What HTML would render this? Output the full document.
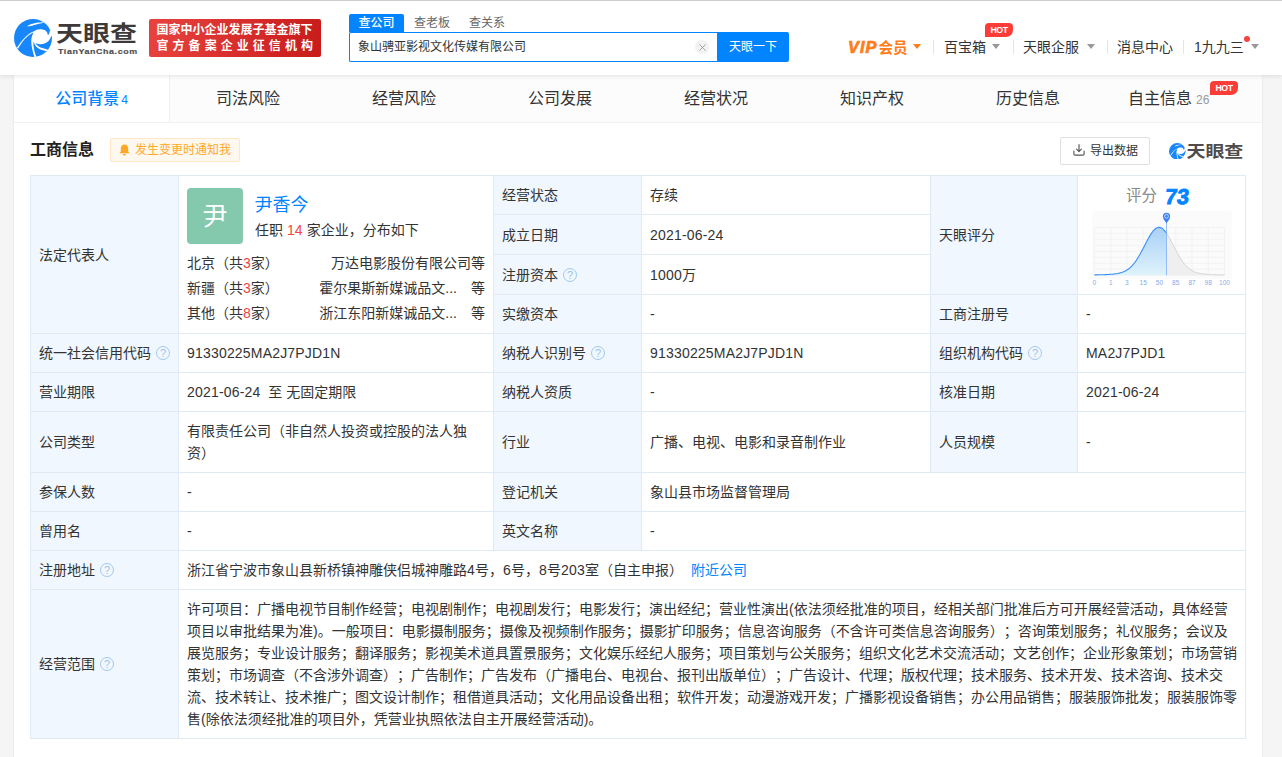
<!DOCTYPE html>
<html lang="zh-CN">
<head>
<meta charset="utf-8">
<title>天眼查</title>
<style>
*{box-sizing:border-box;margin:0;padding:0}
html,body{width:1282px;height:757px;overflow:hidden}
body{background:#f5f5f5;font-family:"Liberation Sans","Noto Sans CJK SC",sans-serif;font-size:14px;color:#333;position:relative;text-spacing-trim:space-all;-webkit-font-smoothing:auto}
a{color:#0084ff;text-decoration:none}
.abs{position:absolute}
/* header */
#hdr{position:absolute;left:0;top:0;width:1282px;height:75px;background:#fff;border-top:1px solid #ccc;box-shadow:0 1px 5px rgba(0,0,0,.105);z-index:5}
#logo{position:absolute;left:14px;top:18px}
#logotxt{position:absolute;left:56px;top:19.3px;font-size:27px;font-weight:700;color:#3e3a39;letter-spacing:0px;line-height:34px;white-space:nowrap;transform:scaleY(.82);transform-origin:0 0}
#logosub{position:absolute;left:57.5px;top:46.3px;font-size:7.4px;font-weight:700;color:#4d4d4d;letter-spacing:.5px;line-height:10px;white-space:nowrap;transform:scaleX(1.2);transform-origin:0 0;-webkit-text-stroke:.15px #4d4d4d}
#redb{position:absolute;left:149px;top:18px;width:172px;height:38px;border-radius:2px;background:linear-gradient(100deg,#e8433f,#c81b1b);color:#fff;font-weight:700;font-size:12px;line-height:16.6px;padding:2.6px 0 0 7.5px;white-space:nowrap}
#redb .l1{letter-spacing:0px;display:block}
#redb .l2{letter-spacing:4.05px;display:block}
.stab{position:absolute;top:13px;height:18px;line-height:18px;font-size:12px;color:#666;white-space:nowrap}
#st1{left:349px;width:55px;background:#0084ff;color:#fff;text-align:center;border-radius:2px 2px 0 0;font-weight:500}
#sbox{position:absolute;left:349px;top:31px;width:368px;height:30px;border:1px solid #0084ff;border-right:none;border-radius:2px 0 0 2px;background:#fff;font-size:12px;line-height:29.4px;padding-left:8px;color:#333;white-space:nowrap}
#sclr{position:absolute;left:695px;top:39px;width:14px;height:14px;border-radius:7px;background:#f2f2f2;color:#888;font-size:11px;line-height:13px;text-align:center}
#sbtn{position:absolute;left:717px;top:31px;width:72px;height:30px;background:#0084ff;color:#fff;font-size:12px;line-height:30.5px;text-align:center;border-radius:0 2px 2px 0}
.nav{position:absolute;top:37px;height:18px;line-height:18px;font-size:14px;color:#333;white-space:nowrap}
.sep{position:absolute;top:39px;width:1px;height:14px;background:#e5e5e5}
.tri{position:absolute;top:43.2px;width:0;height:0;border-left:4.6px solid transparent;border-right:4.6px solid transparent;border-top:5.8px solid #999}
.hot{position:absolute;height:14px;background:#fb3c37;color:#fff;font-size:8.8px;font-weight:700;line-height:14.5px;text-align:center;border-radius:4px 4px 7px 0;letter-spacing:-.5px;font-family:"Liberation Sans",sans-serif}
/* container */
#wrap{position:absolute;left:14px;top:75px;width:1248px;height:690px;background:#fff;box-shadow:0 0 2px rgba(0,0,0,.10)}
.tab{position:absolute;top:75px;height:48px;line-height:47px;font-size:16px;color:#333;text-align:center;background:#fcfcfc;border-bottom:1px solid #f1f1f1;white-space:nowrap}
.tab.on{background:#fff;color:#0084ff;font-weight:500;border-bottom-color:#f1f1f1}
.tab small{font-size:12px;color:#999;font-weight:400;margin-left:2px}
.tab.on small{color:#0084ff}
#ttl{position:absolute;left:30px;top:138px;font-size:16px;font-weight:700;line-height:24px;color:#222}
#ntf{position:absolute;left:110px;top:138px;width:130px;height:24px;border:1px solid #ffe7c7;background:#fff8ee;border-radius:2px;color:#ffa826;font-size:12px;line-height:22px;padding-left:24px;white-space:nowrap}
#exp{position:absolute;left:1060px;top:137px;width:90px;height:28px;border:1px solid #e0e0e0;border-radius:2px;background:#fff;font-size:12px;line-height:26.8px;color:#333;padding-left:29px;white-space:nowrap}
/* table */
.c{position:absolute;border-left:1px solid #dfeaf5;border-top:1px solid #dfeaf5;padding:0 8px;font-size:14px;color:#333;display:flex;align-items:center;background:#fff;line-height:22px}
.c.l{background:#f0f7fe}
#tbl{position:absolute;left:30px;top:175px;width:1216px;height:564px;border-right:1px solid #dfeaf5;border-bottom:1px solid #dfeaf5}
.q{display:inline-block;width:14px;height:14px;border:1.1px solid #a3c8ed;border-radius:7px;color:#9cc3ec;font-size:11px;line-height:12.6px;text-align:center;margin-left:5px;font-family:"Liberation Sans",sans-serif}
.red{color:#f5433e}

.av{position:absolute;left:8px;top:12px;width:56px;height:56px;border-radius:4px;background:#84c9ad;color:#fff;font-size:25px;line-height:56px;text-align:center}
.nm{position:absolute;left:75.5px;top:17px;font-size:18px;line-height:24px;color:#0084ff;white-space:nowrap}
.job{position:absolute;left:76px;top:44px;font-size:14px;line-height:20px;white-space:nowrap}
.ar{position:absolute;left:8px;width:298px;height:20px;line-height:20px;display:flex;justify-content:space-between;white-space:nowrap}
.ar i{display:inline-block;width:14px}
.scope{line-height:22px;white-space:nowrap}
.n{letter-spacing:.19px}
</style>
</head>
<body>
<div id="wrap"></div>
<div id="hdr">
  <svg id="logo" width="38" height="38" viewBox="0 0 38 38"><circle cx="19" cy="19" r="19" fill="#1787fb"/><path d="M33.93 16.30C33.77 15.80 33.52 14.20 32.97 13.32C32.42 12.43 31.74 11.50 30.63 10.97C29.52 10.44 27.62 10.18 26.32 10.15C25.02 10.11 23.80 10.46 22.83 10.78C21.86 11.10 20.87 11.84 20.48 12.05C19.45 12.61 16.25 13.93 14.27 15.41C12.28 16.89 10.44 18.71 8.56 20.93C6.68 23.15 3.91 27.43 2.98 28.73C3.15 28.91 3.83 29.62 3.99 29.80C4.88 28.46 7.52 24.00 9.32 21.75C11.12 19.50 13.08 17.73 14.77 16.30C16.47 14.86 18.69 13.65 19.47 13.13C19.18 13.95 18.11 16.40 17.76 18.07C17.40 19.74 17.24 21.14 17.31 23.15C17.39 25.15 17.67 27.58 18.20 30.12C18.73 32.66 20.10 36.99 20.48 38.36C20.80 38.31 22.07 38.10 22.38 38.05C22.04 36.94 20.78 33.34 20.29 31.39C19.81 29.43 19.58 27.80 19.47 26.32C19.35 24.84 19.57 23.15 19.59 22.51C19.97 23.30 20.76 25.95 21.88 27.27C23.00 28.59 24.47 29.61 26.32 30.44C28.17 31.26 31.86 31.92 32.97 32.21C33.13 31.97 33.77 31.00 33.93 30.75C32.87 30.44 29.27 29.54 27.58 28.85C25.89 28.17 24.82 27.46 23.78 26.63C22.74 25.81 21.77 24.36 21.37 23.91C22.09 24.12 24.17 25.07 25.68 25.17C27.19 25.28 28.96 25.09 30.44 24.54C31.92 23.99 33.39 23.15 34.56 21.88C35.73 20.61 36.99 17.76 37.48 16.93C37.73 16.49 39.06 15.11 39.00 14.27C38.93 13.42 37.41 12.26 37.10 11.86C36.86 11.86 35.93 11.86 35.70 11.86C35.64 12.26 35.62 13.53 35.32 14.27C35.02 15.01 34.16 15.96 33.93 16.30Z" fill="#fff"/><path d="M12.87 7.29C13.53 6.95 15.20 5.84 16.80 5.26C18.41 4.68 20.40 4.14 22.51 3.80C24.62 3.47 28.32 3.33 29.49 3.23C29.51 3.32 29.59 3.66 29.61 3.74C28.54 3.99 25.07 4.78 23.15 5.26C21.22 5.75 19.78 6.32 18.07 6.66C16.36 7.00 13.74 7.19 12.87 7.29Z" fill="#fff"/></svg>
  <div id="logotxt">天眼查</div>
  <div id="logosub">TianYanCha.com</div>
  <div id="redb"><span class="l1">国家中小企业发展子基金旗下</span><span class="l2">官方备案企业征信机构</span></div>

  <div class="stab" id="st1">查公司</div>
  <div class="stab" style="left:414px">查老板</div>
  <div class="stab" style="left:469px">查关系</div>
  <div id="sbox">象山骋亚影视文化传媒有限公司</div>
  <div id="sclr"><svg class="abs" style="left:3.5px;top:3.5px" width="7" height="7" viewBox="0 0 7 7"><path d="M0.4 0.4 L6.6 6.6 M6.6 0.4 L0.4 6.6" stroke="#8a8a8a" stroke-width="0.75" fill="none"/></svg></div>
  <div id="sbtn">天眼一下</div>

  <div class="nav" style="left:848px;top:37.2px;color:#ff7d18;font-weight:700;font-style:italic;font-size:16.3px;font-family:'Liberation Sans',sans-serif;letter-spacing:1.1px;-webkit-text-stroke:.7px #ff7d18">VIP</div>
  <div class="nav" style="left:878.5px;top:37.5px;color:#ff7d18;font-weight:700;font-size:14.5px">会员</div>
  <div class="tri" style="left:913px;border-top-color:#ff7d18"></div>
  <div class="sep" style="left:933px"></div>
  <div class="nav" style="left:944px">百宝箱</div>
  <div class="tri" style="left:992.3px"></div>
  <div class="hot" style="left:985px;top:21.8px;width:28px">HOT</div>
  <div class="sep" style="left:1013px"></div>
  <div class="nav" style="left:1023px">天眼企服</div>
  <div class="tri" style="left:1086.5px"></div>
  <div class="sep" style="left:1107px"></div>
  <div class="nav" style="left:1117px">消息中心</div>
  <div class="sep" style="left:1183px"></div>
  <div class="nav" style="left:1194px">1九九三</div>
  <div class="abs" style="left:1244px;top:35px;width:6px;height:6px;border-radius:3px;background:#f5433e"></div>
  <div class="tri" style="left:1250.8px"></div>
</div>

<!-- tabs -->
<div class="tab on" style="left:14px;width:155px">公司背景<small>4</small></div>
<div class="tab" style="left:169px;width:157px;border-left:1px solid #efefef">司法风险</div>
<div class="tab" style="left:326px;width:156px">经营风险</div>
<div class="tab" style="left:482px;width:156px">公司发展</div>
<div class="tab" style="left:638px;width:156px">经营状况</div>
<div class="tab" style="left:794px;width:156px">知识产权</div>
<div class="tab" style="left:950px;width:156px">历史信息</div>
<div class="tab" style="left:1106px;width:156px;text-align:left;padding-left:22px">自主信息<small style="margin-left:4px">26</small></div>
<div class="hot" style="left:1210px;top:80.8px;width:28px;z-index:2">HOT</div>

<div id="ttl">工商信息</div>
<div id="ntf">发生变更时通知我
  <svg class="abs" style="left:8.2px;top:4.6px" width="11" height="12" viewBox="0 0 11 12"><path d="M5.5 0.5 C3 0.5 1.8 2.5 1.8 5 L1.8 7.5 L0.5 9.2 L10.5 9.2 L9.2 7.5 L9.2 5 C9.2 2.5 8 0.5 5.5 0.5 Z M4 10 L7 10 C7 11 6.3 11.6 5.5 11.6 C4.7 11.6 4 11 4 10Z" fill="#ffa826"/></svg>
</div>
<div id="exp">导出数据
  <svg class="abs" style="left:12px;top:6.3px" width="12" height="12" viewBox="0 0 12 12"><path d="M6 0.6 V7.4 M3.6 5.2 L6 7.6 L8.4 5.2 M0.9 7 V9.9 Q0.9 11.1 2.1 11.1 H9.9 Q11.1 11.1 11.1 9.9 V7" fill="none" stroke="#555" stroke-width="1.15" stroke-linecap="round" stroke-linejoin="round"/></svg>
</div>
<div class="abs" id="wm" style="left:1169px;top:139px;white-space:nowrap">
  <svg class="abs" style="left:0.4px;top:3.6px" width="16.5" height="16.5" viewBox="0 0 38 38"><circle cx="19" cy="19" r="19" fill="#1787fb"/><path d="M33.93 16.30C33.77 15.80 33.52 14.20 32.97 13.32C32.42 12.43 31.74 11.50 30.63 10.97C29.52 10.44 27.62 10.18 26.32 10.15C25.02 10.11 23.80 10.46 22.83 10.78C21.86 11.10 20.87 11.84 20.48 12.05C19.45 12.61 16.25 13.93 14.27 15.41C12.28 16.89 10.44 18.71 8.56 20.93C6.68 23.15 3.91 27.43 2.98 28.73C3.15 28.91 3.83 29.62 3.99 29.80C4.88 28.46 7.52 24.00 9.32 21.75C11.12 19.50 13.08 17.73 14.77 16.30C16.47 14.86 18.69 13.65 19.47 13.13C19.18 13.95 18.11 16.40 17.76 18.07C17.40 19.74 17.24 21.14 17.31 23.15C17.39 25.15 17.67 27.58 18.20 30.12C18.73 32.66 20.10 36.99 20.48 38.36C20.80 38.31 22.07 38.10 22.38 38.05C22.04 36.94 20.78 33.34 20.29 31.39C19.81 29.43 19.58 27.80 19.47 26.32C19.35 24.84 19.57 23.15 19.59 22.51C19.97 23.30 20.76 25.95 21.88 27.27C23.00 28.59 24.47 29.61 26.32 30.44C28.17 31.26 31.86 31.92 32.97 32.21C33.13 31.97 33.77 31.00 33.93 30.75C32.87 30.44 29.27 29.54 27.58 28.85C25.89 28.17 24.82 27.46 23.78 26.63C22.74 25.81 21.77 24.36 21.37 23.91C22.09 24.12 24.17 25.07 25.68 25.17C27.19 25.28 28.96 25.09 30.44 24.54C31.92 23.99 33.39 23.15 34.56 21.88C35.73 20.61 36.99 17.76 37.48 16.93C37.73 16.49 39.06 15.11 39.00 14.27C38.93 13.42 37.41 12.26 37.10 11.86C36.86 11.86 35.93 11.86 35.70 11.86C35.64 12.26 35.62 13.53 35.32 14.27C35.02 15.01 34.16 15.96 33.93 16.30Z" fill="#fff"/><path d="M12.87 7.29C13.53 6.95 15.20 5.84 16.80 5.26C18.41 4.68 20.40 4.14 22.51 3.80C24.62 3.47 28.32 3.33 29.49 3.23C29.51 3.32 29.59 3.66 29.61 3.74C28.54 3.99 25.07 4.78 23.15 5.26C21.22 5.75 19.78 6.32 18.07 6.66C16.36 7.00 13.74 7.19 12.87 7.29Z" fill="#fff"/></svg>
  <span class="abs" style="left:17.5px;top:3.2px;font-size:19px;font-weight:700;color:#4f4c4b;line-height:24px;letter-spacing:-.1px;transform:scaleY(.84);transform-origin:0 0">天眼查</span>
</div>

<div id="tbl">
<div class="c l" style="left:0px;top:0px;width:148px;height:158px;">法定代表人</div>
<div class="c" style="left:148px;top:0px;width:315px;height:158px;display:block;padding:0"><div class="av">尹</div><a class="nm">尹香今</a><div class="job">任职 <span class="red"><span class="n">14</span></span> 家企业，分布如下</div>
<div class="ar" style="top:77.3px"><span>北京（共<span class="red">3</span>家）</span><span>万达电影股份有限公司等</span></div>
<div class="ar" style="top:102px"><span>新疆（共<span class="red">3</span>家）</span><span>霍尔果斯新媒诚品文...<i></i>等</span></div>
<div class="ar" style="top:126.8px"><span>其他（共<span class="red">8</span>家）</span><span>浙江东阳新媒诚品文...<i></i>等</span></div></div>
<div class="c l" style="left:463px;top:0px;width:148px;height:39px;">经营状态</div>
<div class="c" style="left:611px;top:0px;width:289px;height:39px;">存续</div>
<div class="c l" style="left:463px;top:39px;width:148px;height:40px;">成立日期</div>
<div class="c" style="left:611px;top:39px;width:289px;height:40px;"><span class="n">2021-06-24</span></div>
<div class="c l" style="left:463px;top:79px;width:148px;height:40px;">注册资本 <span class="q">?</span></div>
<div class="c" style="left:611px;top:79px;width:289px;height:40px;"><span class="n">1000</span>万</div>
<div class="c l" style="left:463px;top:119px;width:148px;height:39px;">实缴资本</div>
<div class="c" style="left:611px;top:119px;width:289px;height:39px;">-</div>
<div class="c l" style="left:900px;top:0px;width:147px;height:119px;">天眼评分</div>
<div class="c" style="left:1047px;top:0px;width:168px;height:119px;display:block;padding:0"><svg class="abs" style="left:0;top:0" width="167" height="118" viewBox="0 0 167 118">
<defs><linearGradient id="bg1" x1="0" y1="0" x2="0" y2="1"><stop offset="0" stop-color="#a9d0f7"/><stop offset="1" stop-color="#def3fb"/></linearGradient></defs>
<rect x="13.7" y="35" width="140" height="68" fill="#fbfbfb"/>
<g stroke="#ededed" stroke-width="0.6"><line x1="16.4" y1="51.4" x2="16.4" y2="99.2"/><line x1="32.7" y1="51.4" x2="32.7" y2="99.2"/><line x1="48.9" y1="51.4" x2="48.9" y2="99.2"/><line x1="65.2" y1="51.4" x2="65.2" y2="99.2"/><line x1="81.4" y1="51.4" x2="81.4" y2="99.2"/><line x1="97.7" y1="51.4" x2="97.7" y2="99.2"/><line x1="114.0" y1="51.4" x2="114.0" y2="99.2"/><line x1="130.2" y1="51.4" x2="130.2" y2="99.2"/><line x1="146.5" y1="51.4" x2="146.5" y2="99.2"/><line x1="16.4" y1="51.4" x2="146.5" y2="51.4"/><line x1="16.4" y1="57.4" x2="146.5" y2="57.4"/><line x1="16.4" y1="63.4" x2="146.5" y2="63.4"/><line x1="16.4" y1="69.3" x2="146.5" y2="69.3"/><line x1="16.4" y1="75.3" x2="146.5" y2="75.3"/><line x1="16.4" y1="81.3" x2="146.5" y2="81.3"/><line x1="16.4" y1="87.2" x2="146.5" y2="87.2"/><line x1="16.4" y1="93.2" x2="146.5" y2="93.2"/><line x1="16.4" y1="99.2" x2="146.5" y2="99.2"/></g>
<polygon points="16.4,98.9 17.4,98.9 18.4,98.9 19.4,98.9 20.4,98.8 21.4,98.8 22.4,98.8 23.4,98.8 24.4,98.7 25.4,98.7 26.4,98.7 27.4,98.6 28.4,98.6 29.4,98.5 30.4,98.5 31.4,98.4 32.4,98.3 33.4,98.3 34.4,98.2 35.4,98.1 36.4,98.0 37.4,97.8 38.4,97.7 39.4,97.5 40.4,97.3 41.4,97.1 42.4,96.8 43.4,96.5 44.4,96.2 45.4,95.8 46.4,95.4 47.4,94.9 48.4,94.3 49.4,93.7 50.4,93.0 51.4,92.2 52.4,91.4 53.4,90.4 54.4,89.3 55.4,88.2 56.4,87.0 57.4,85.6 58.4,84.2 59.4,82.6 60.4,81.0 61.4,79.3 62.4,77.6 63.4,75.7 64.4,73.8 65.4,71.9 66.4,69.9 67.4,68.0 68.4,66.1 69.4,64.2 70.4,62.3 71.4,60.6 72.4,58.9 73.4,57.4 74.4,56.0 75.4,54.7 76.4,53.7 77.4,52.8 78.4,52.1 79.4,51.7 80.4,51.4 81.4,51.4 82.5,51.6 83.5,52.1 84.5,52.7 85.5,53.6 86.5,54.6 87.5,55.8 88.5,57.2 88.5,57.3 88.5,99.2 16.4,99.2" fill="url(#bg1)"/>
<polygon points="88.5,57.3 89.5,58.7 90.5,60.4 91.5,62.1 92.5,64.0 93.5,65.9 94.5,67.8 95.5,69.7 96.5,71.7 97.5,73.6 98.5,75.5 99.5,77.4 100.5,79.2 101.5,80.9 102.5,82.5 103.5,84.0 104.5,85.5 105.5,86.8 106.5,88.1 107.5,89.2 108.5,90.3 109.5,91.3 110.5,92.1 111.5,92.9 112.5,93.6 113.5,94.3 114.5,94.8 115.5,95.3 116.5,95.8 117.5,96.2 118.5,96.5 119.5,96.8 120.5,97.1 121.5,97.3 122.5,97.5 123.5,97.7 124.5,97.8 125.5,97.9 126.5,98.1 127.5,98.2 128.5,98.2 129.5,98.3 130.5,98.4 131.5,98.5 132.5,98.5 133.5,98.6 134.5,98.6 135.5,98.6 136.5,98.7 137.5,98.7 138.5,98.8 139.5,98.8 140.5,98.8 141.5,98.8 142.5,98.9 143.5,98.9 144.5,98.9 145.5,98.9 146.5,98.9 146.5,99.2 88.5,99.2" fill="#efefef"/>
<polyline points="88.5,57.3 89.5,58.7 90.5,60.4 91.5,62.1 92.5,64.0 93.5,65.9 94.5,67.8 95.5,69.7 96.5,71.7 97.5,73.6 98.5,75.5 99.5,77.4 100.5,79.2 101.5,80.9 102.5,82.5 103.5,84.0 104.5,85.5 105.5,86.8 106.5,88.1 107.5,89.2 108.5,90.3 109.5,91.3 110.5,92.1 111.5,92.9 112.5,93.6 113.5,94.3 114.5,94.8 115.5,95.3 116.5,95.8 117.5,96.2 118.5,96.5 119.5,96.8 120.5,97.1 121.5,97.3 122.5,97.5 123.5,97.7 124.5,97.8 125.5,97.9 126.5,98.1 127.5,98.2 128.5,98.2 129.5,98.3 130.5,98.4 131.5,98.5 132.5,98.5 133.5,98.6 134.5,98.6 135.5,98.6 136.5,98.7 137.5,98.7 138.5,98.8 139.5,98.8 140.5,98.8 141.5,98.8 142.5,98.9 143.5,98.9 144.5,98.9 145.5,98.9 146.5,98.9" fill="none" stroke="#d4d4d4" stroke-width="1"/>
<polyline points="16.4,98.9 17.4,98.9 18.4,98.9 19.4,98.9 20.4,98.8 21.4,98.8 22.4,98.8 23.4,98.8 24.4,98.7 25.4,98.7 26.4,98.7 27.4,98.6 28.4,98.6 29.4,98.5 30.4,98.5 31.4,98.4 32.4,98.3 33.4,98.3 34.4,98.2 35.4,98.1 36.4,98.0 37.4,97.8 38.4,97.7 39.4,97.5 40.4,97.3 41.4,97.1 42.4,96.8 43.4,96.5 44.4,96.2 45.4,95.8 46.4,95.4 47.4,94.9 48.4,94.3 49.4,93.7 50.4,93.0 51.4,92.2 52.4,91.4 53.4,90.4 54.4,89.3 55.4,88.2 56.4,87.0 57.4,85.6 58.4,84.2 59.4,82.6 60.4,81.0 61.4,79.3 62.4,77.6 63.4,75.7 64.4,73.8 65.4,71.9 66.4,69.9 67.4,68.0 68.4,66.1 69.4,64.2 70.4,62.3 71.4,60.6 72.4,58.9 73.4,57.4 74.4,56.0 75.4,54.7 76.4,53.7 77.4,52.8 78.4,52.1 79.4,51.7 80.4,51.4 81.4,51.4 82.5,51.6 83.5,52.1 84.5,52.7 85.5,53.6 86.5,54.6 87.5,55.8 88.5,57.2 88.5,57.3" fill="none" stroke="#3b8ff7" stroke-width="1.1"/>
<line x1="88.5" y1="46" x2="88.5" y2="99.2" stroke="#6da5fa" stroke-width="0.7"/>
<path d="M88.5 47.5 C87.0 44.5 84.9 43 84.9 40.4 A3.6 3.6 0 1 1 92.1 40.4 C92.1 43 90.0 44.5 88.5 47.5Z" fill="#3d7ff5"/>
<circle cx="88.5" cy="40.3" r="1.9" fill="none" stroke="#cfe3ff" stroke-width="0.9"/>
<g font-family="Liberation Sans, sans-serif" font-size="6.5" fill="#83abec"><text x="16.4" y="108.8" text-anchor="middle">0</text><text x="32.7" y="108.8" text-anchor="middle">1</text><text x="48.9" y="108.8" text-anchor="middle">3</text><text x="65.2" y="108.8" text-anchor="middle">15</text><text x="81.4" y="108.8" text-anchor="middle">50</text><text x="97.7" y="108.8" text-anchor="middle">85</text><text x="114.0" y="108.8" text-anchor="middle">87</text><text x="130.2" y="108.8" text-anchor="middle">98</text><text x="146.5" y="108.8" text-anchor="middle">100</text></g>
</svg>
<div class="abs" style="left:48px;top:10px;font-size:15.5px;color:#8a8a8a;line-height:20px;white-space:nowrap">评分</div>
<div class="abs" style="left:87px;top:8.2px;font-size:21.5px;font-weight:700;color:#0084ff;line-height:26px;font-family:'Liberation Sans',sans-serif;letter-spacing:0.2px;-webkit-text-stroke:0.9px #0084ff;transform:skewX(-7deg)">73</div></div>
<div class="c l" style="left:900px;top:119px;width:147px;height:39px;">工商注册号</div>
<div class="c" style="left:1047px;top:119px;width:168px;height:39px;">-</div>
<div class="c l" style="left:0px;top:158px;width:148px;height:39px;">统一社会信用代码<span class="q">?</span></div>
<div class="c" style="left:148px;top:158px;width:315px;height:39px;"><span class="n">91330225MA2J7PJD1N</span></div>
<div class="c l" style="left:463px;top:158px;width:148px;height:39px;">纳税人识别号<span class="q">?</span></div>
<div class="c" style="left:611px;top:158px;width:289px;height:39px;"><span class="n">91330225MA2J7PJD1N</span></div>
<div class="c l" style="left:900px;top:158px;width:147px;height:39px;">组织机构代码<span class="q">?</span></div>
<div class="c" style="left:1047px;top:158px;width:168px;height:39px;"><span class="n">MA2J7PJD1</span></div>
<div class="c l" style="left:0px;top:197px;width:148px;height:39px;">营业期限</div>
<div class="c" style="left:148px;top:197px;width:315px;height:39px;"><span class="n">2021-06-24</span>&nbsp; 至 无固定期限</div>
<div class="c l" style="left:463px;top:197px;width:148px;height:39px;">纳税人资质</div>
<div class="c" style="left:611px;top:197px;width:289px;height:39px;">-</div>
<div class="c l" style="left:900px;top:197px;width:147px;height:39px;">核准日期</div>
<div class="c" style="left:1047px;top:197px;width:168px;height:39px;"><span class="n">2021-06-24</span></div>
<div class="c l" style="left:0px;top:236px;width:148px;height:61px;">公司类型</div>
<div class="c" style="left:148px;top:236px;width:315px;height:61px;"><div style="white-space:nowrap">有限责任公司（非自然人投资或控股的法人独<br>资）</div></div>
<div class="c l" style="left:463px;top:236px;width:148px;height:61px;">行业</div>
<div class="c" style="left:611px;top:236px;width:289px;height:61px;">广播、电视、电影和录音制作业</div>
<div class="c l" style="left:900px;top:236px;width:147px;height:61px;">人员规模</div>
<div class="c" style="left:1047px;top:236px;width:168px;height:61px;">-</div>
<div class="c l" style="left:0px;top:297px;width:148px;height:39px;">参保人数</div>
<div class="c" style="left:148px;top:297px;width:315px;height:39px;">-</div>
<div class="c l" style="left:463px;top:297px;width:148px;height:39px;">登记机关</div>
<div class="c" style="left:611px;top:297px;width:604px;height:39px;">象山县市场监督管理局</div>
<div class="c l" style="left:0px;top:336px;width:148px;height:39px;">曾用名</div>
<div class="c" style="left:148px;top:336px;width:315px;height:39px;">-</div>
<div class="c l" style="left:463px;top:336px;width:148px;height:39px;">英文名称</div>
<div class="c" style="left:611px;top:336px;width:604px;height:39px;">-</div>
<div class="c l" style="left:0px;top:375px;width:148px;height:39px;">注册地址<span class="q">?</span></div>
<div class="c" style="left:148px;top:375px;width:1067px;height:39px;">浙江省宁波市象山县新桥镇神雕侠侣城神雕路<span class="n">4</span>号，<span class="n">6</span>号，<span class="n">8</span>号<span class="n">203</span>室（自主申报）<a style="margin-left:8px">附近公司</a></div>
<div class="c l" style="left:0px;top:414px;width:148px;height:149px;">经营范围<span class="q">?</span></div>
<div class="c" style="left:148px;top:414px;width:1067px;height:149px;"><div class="scope">许可项目：广播电视节目制作经营；电视剧制作；电视剧发行；电影发行；演出经纪；营业性演出(依法须经批准的项目，经相关部门批准后方可开展经营活动，具体经营<br>项目以审批结果为准)。一般项目：电影摄制服务；摄像及视频制作服务；摄影扩印服务；信息咨询服务（不含许可类信息咨询服务）；咨询策划服务；礼仪服务；会议及<br>展览服务；专业设计服务；翻译服务；影视美术道具置景服务；文化娱乐经纪人服务；项目策划与公关服务；组织文化艺术交流活动；文艺创作；企业形象策划；市场营销<br>策划；市场调查（不含涉外调查）；广告制作；广告发布（广播电台、电视台、报刊出版单位）；广告设计、代理；版权代理；技术服务、技术开发、技术咨询、技术交<br>流、技术转让、技术推广；图文设计制作；租借道具活动；文化用品设备出租；软件开发；动漫游戏开发；广播影视设备销售；办公用品销售；服装服饰批发；服装服饰零<br>售(除依法须经批准的项目外，凭营业执照依法自主开展经营活动)。</div></div>
</div>
</body>
</html>
